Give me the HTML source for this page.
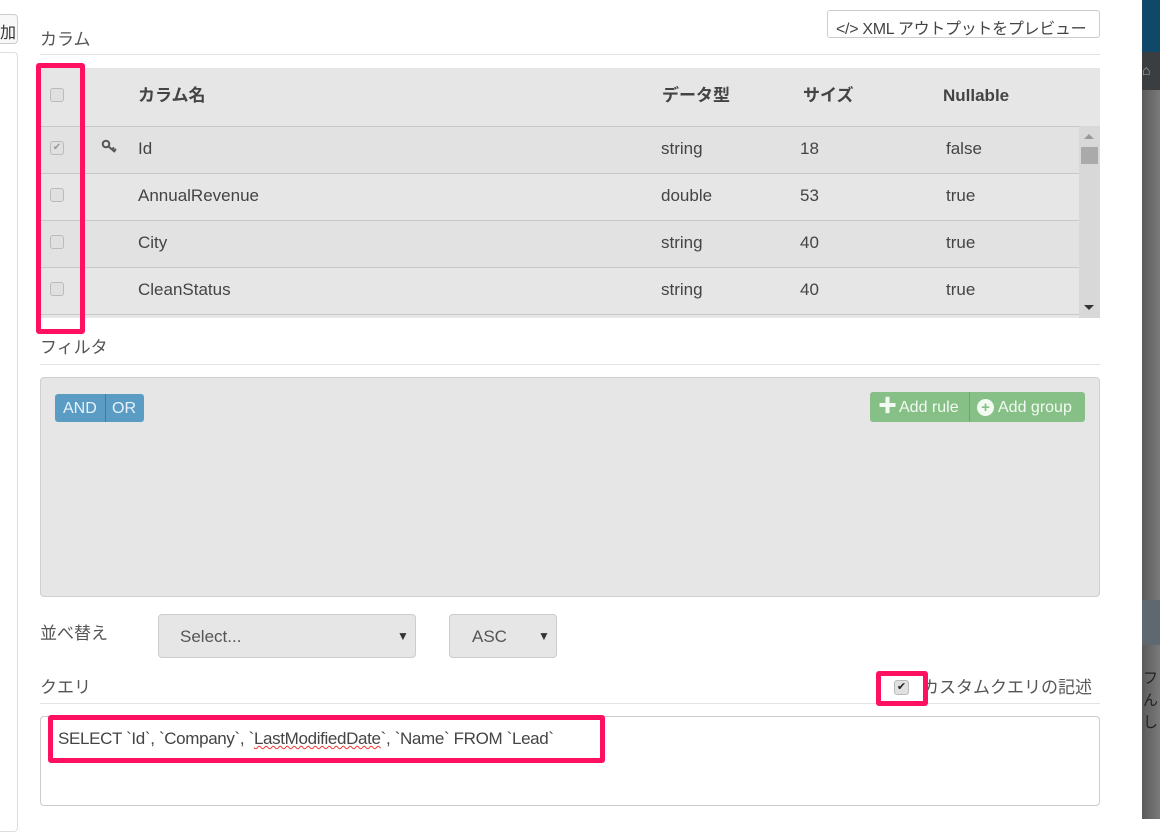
<!DOCTYPE html>
<html><head><meta charset="utf-8"><style>
*{box-sizing:border-box;margin:0;padding:0}
body{width:1160px;height:819px;overflow:hidden;background:#fff;position:relative;font-family:"Liberation Sans","Noto Sans CJK JP",sans-serif;color:#333}
.a{position:absolute}
.t{font-size:17px;color:#555;line-height:20px}
.cb{position:absolute;width:14px;height:14px;border:1px solid #bbb;border-radius:3px;background:#e0e0e0}
.row{position:absolute;left:40px;width:1039px;height:47px;border-top:1px solid #c8c8c8;font-size:17px;color:#444}
.row span{position:absolute;top:12px;line-height:20px}
.pink{position:absolute;border:5px solid #ff1060;border-radius:3px}
.h{position:absolute;top:18px;line-height:20px}
</style></head><body>
<div class="a" style="left:-10px;top:14px;width:28px;height:30px;border:1px solid #ccc;border-radius:4px;background:#f8f8f8;font-size:16px;padding:4px 0 0 9px">加</div>
<div class="a" style="left:-10px;top:52px;width:28px;height:780px;border:1px solid #ddd;border-radius:4px"></div>
<div class="a" style="left:1142px;top:0;width:18px;height:52px;background:#0f4868"></div>
<div class="a" style="left:1142px;top:52px;width:18px;height:38px;background:#3b3e41;color:#aaa;font-size:14px;padding-top:10px">⌂</div>
<div class="a" style="left:1142px;top:90px;width:18px;height:729px;background:linear-gradient(90deg,#5a5a5a,#7a7a7a)"></div>
<div class="a" style="left:1142px;top:600px;width:18px;height:45px;background:#5d6870"></div>
<div class="a" style="left:1143px;top:668px;font-size:15px;color:#222;line-height:22px">フ<br>ん<br>し</div>

<div class="a t" style="left:40px;top:30px">カラム</div>
<div class="a" style="left:827px;top:10px;width:273px;height:28px;border:1px solid #ccc;border-radius:3px;background:#fff;font-size:16px;color:#444;padding:4px 0 0 8px;white-space:nowrap;letter-spacing:-0.3px">&lt;/&gt; XML アウトプットをプレビュー</div>
<div class="a" style="left:40px;top:54px;width:1060px;border-top:1px solid #e3e3e3"></div>

<div class="a" style="left:40px;top:68px;width:1060px;height:250px;background:#e6e6e6"></div>
<div class="a" style="left:40px;top:68px;width:1060px;height:58px;font-size:17px;font-weight:bold;color:#444">
<span class="h" style="left:98px">カラム名</span>
<span class="h" style="left:622px">データ型</span>
<span class="h" style="left:763px">サイズ</span>
<span class="h" style="left:903px">Nullable</span>
</div>
<div class="cb" style="left:50px;top:88px"></div>
<div class="row" style="top:126px;background:#e2e2e2"><span style="left:98px">Id</span><span style="left:621px">string</span><span style="left:760px">18</span><span style="left:906px">false</span>
<svg class="a" style="left:61px;top:12px" width="20" height="16" viewBox="0 0 20 16"><circle cx="5" cy="5" r="3.3" fill="none" stroke="#555" stroke-width="2"/><path d="M7.5 7.5 L14 13 M11 10.5 L13 8.5 M13 12 L15 10" stroke="#555" stroke-width="2" fill="none"/></svg></div>
<div class="row" style="top:173px"><span style="left:98px">AnnualRevenue</span><span style="left:621px">double</span><span style="left:760px">53</span><span style="left:906px">true</span></div>
<div class="row" style="top:220px;background:#e2e2e2"><span style="left:98px">City</span><span style="left:621px">string</span><span style="left:760px">40</span><span style="left:906px">true</span></div>
<div class="row" style="top:267px"><span style="left:98px">CleanStatus</span><span style="left:621px">string</span><span style="left:760px">40</span><span style="left:906px">true</span></div>
<div class="a" style="left:40px;top:314px;width:1039px;border-top:1px solid #c8c8c8"></div>
<div class="cb" style="left:50px;top:141px;font-size:10px;color:#999;text-align:center;line-height:12px">✔</div>
<div class="cb" style="left:50px;top:188px"></div>
<div class="cb" style="left:50px;top:235px"></div>
<div class="cb" style="left:50px;top:282px"></div>
<div class="a" style="left:1079px;top:126px;width:21px;height:192px;background:#d8d8d8"></div>
<div class="a" style="left:1084px;top:134px;width:0;height:0;border:5px solid transparent;border-bottom-color:#999;border-top:0"></div>
<div class="a" style="left:1081px;top:147px;width:17px;height:17px;background:#aaa"></div>
<div class="a" style="left:1084px;top:305px;width:0;height:0;border:5px solid transparent;border-top-color:#333;border-bottom:0"></div>
<div class="pink" style="left:36px;top:63px;width:49px;height:271px"></div>

<div class="a t" style="left:40px;top:338px">フィルタ</div>
<div class="a" style="left:40px;top:364px;width:1060px;border-top:1px solid #e3e3e3"></div>
<div class="a" style="left:40px;top:377px;width:1060px;height:220px;background:#e6e6e6;border:1px solid #d0d0d0;border-radius:4px"></div>
<div class="a" style="left:55px;top:394px;width:89px;height:28px;background:#5b9cc4;border-radius:3px;color:#e8f2f8;font-size:16px">
<span class="a" style="left:8px;top:6px">AND</span><span class="a" style="left:50px;top:0;height:28px;border-left:1px solid #3d7ca3"></span><span class="a" style="left:57px;top:6px">OR</span></div>
<div class="a" style="left:870px;top:392px;width:215px;height:30px;background:#87c087;border-radius:3px;color:#f2faf2;font-size:16px;white-space:nowrap">
<span class="a" style="left:8px;top:5px;font-weight:bold;font-size:19px;line-height:20px">✚</span><span class="a" style="left:29px;top:7px">Add rule</span>
<span class="a" style="left:99px;top:0;height:30px;border-left:1px solid #6aa86a"></span>
<span class="a" style="left:107px;top:7px;width:17px;height:17px;border-radius:50%;background:#f2faf2;color:#87c087;font-weight:bold;font-size:15px;line-height:17px;text-align:center">+</span><span class="a" style="left:128px;top:7px">Add group</span></div>

<div class="a t" style="left:40px;top:624px">並べ替え</div>
<div class="a" style="left:158px;top:614px;width:258px;height:44px;background:#e6e6e6;border:1px solid #ccc;border-radius:4px;font-size:17px;color:#555"><span class="a" style="left:21px;top:12px">Select...</span><span class="a" style="left:238px;top:14px;font-size:12px;color:#333">▼</span></div>
<div class="a" style="left:449px;top:614px;width:108px;height:44px;background:#e6e6e6;border:1px solid #ccc;border-radius:4px;font-size:17px;color:#555"><span class="a" style="left:22px;top:12px">ASC</span><span class="a" style="left:88px;top:14px;font-size:12px;color:#333">▼</span></div>

<div class="a t" style="left:40px;top:678px">クエリ</div>
<div class="a" style="left:40px;top:703px;width:1060px;border-top:1px solid #e3e3e3"></div>
<div class="a t" style="left:922px;top:678px">カスタムクエリの記述</div>
<div class="cb" style="left:894px;top:680px;width:15px;height:15px;font-size:11px;color:#222;text-align:center;line-height:13px">✔</div>
<div class="pink" style="left:876px;top:671px;width:52px;height:35px"></div>

<div class="a" style="left:40px;top:716px;width:1060px;height:90px;border:1px solid #ccc;border-radius:4px"></div>
<div class="a" style="left:58px;top:729px;font-size:17px;color:#444;white-space:nowrap;letter-spacing:-0.35px;line-height:20px">SELECT `Id`, `Company`, `<span style="text-decoration:underline wavy #e33;text-decoration-thickness:1px">LastModifiedDate</span>`, `Name` FROM `Lead`</div>
<div class="pink" style="left:48px;top:715px;width:557px;height:48px"></div>
</body></html>
